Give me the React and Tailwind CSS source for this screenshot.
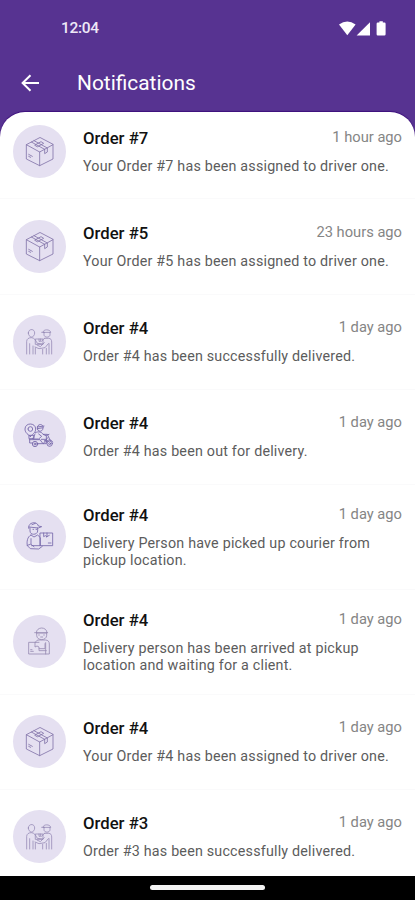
import React from 'react'

const notifications = [
    { id: 1, icon: 'box', title: 'Order #7', time: '1 hour ago', lines: ['Your Order #7 has been assigned to driver one.'] },
    { id: 2, icon: 'box', title: 'Order #5', time: '23 hours ago', lines: ['Your Order #5 has been assigned to driver one.'] },
    { id: 3, icon: 'delivered', title: 'Order #4', time: '1 day ago', lines: ['Order #4 has been successfully delivered.'] },
    { id: 4, icon: 'scooter', title: 'Order #4', time: '1 day ago', lines: ['Order #4 has been out for delivery.'] },
    { id: 5, icon: 'picked', title: 'Order #4', time: '1 day ago', lines: ['Delivery Person have picked up courier from', 'pickup location.'] },
    { id: 6, icon: 'arrived', title: 'Order #4', time: '1 day ago', lines: ['Delivery person has been arrived at pickup', 'location and waiting for a client.'] },
    { id: 7, icon: 'box', title: 'Order #4', time: '1 day ago', lines: ['Your Order #4 has been assigned to driver one.'] },
    { id: 8, icon: 'delivered', title: 'Order #3', time: '1 day ago', lines: ['Order #3 has been successfully delivered.'] },
]

export default function App() {
    return (
        <div className="w-full h-[900px] bg-[#573391] flex flex-col overflow-hidden font-['Roboto',sans-serif]">
            <StatusBar />
            <header className="h-[55px] shrink-0 flex items-center pl-[20px] pb-[4px]">
                <BackArrow />
                <h1 className="ml-[37px] pt-[2px] text-[20.9px] leading-none text-white">Notifications</h1>
            </header>

            <main className="flex-1 min-h-0 bg-white rounded-t-[25px] overflow-hidden shadow-[0_-1px_1px_#3d0f7d]">
                <div className="-mt-[8px]">
                    {notifications.map((item) => (
                        <NotificationRow key={item.id} item={item} />
                    ))}
                </div>
            </main>

            <div className="h-[24px] shrink-0 bg-black flex justify-center pt-[9px]">
                <div className="w-[115px] h-[5px] rounded-full bg-[#f4f4f4]" />
            </div>
        </div>
    )
}

function StatusBar() {
    return (
        <div className="h-[57px] shrink-0 flex items-center justify-between pl-[61px] pr-[28px]">
            <span className="text-[15.5px] font-medium leading-none text-[#eee8f7] pt-[1px] tracking-[-0.3px]">12:04</span>
            <svg width="48" height="16" viewBox="0 0 48 16" fill="white">
                <path d="M0 3.4Q8.3-2.4 16.6 3.4L8.3 14.2Z" />
                <path d="M31 1.2V14.4H17.6Z" />
                <path d="M40.4 0.2h3.4v1.3h1.6q1.2 0 1.2 1.2v10.6q0 1.2-1.2 1.2h-6.6q-1.2 0-1.2-1.2V2.7q0-1.2 1.2-1.2h1.6z" />
            </svg>
        </div>
    )
}

function BackArrow() {
    return (
        <svg width="20" height="18" viewBox="0 0 20 18" fill="none" stroke="white" strokeWidth="2">
            <path d="M19 9H3M10.5 1.2L2.6 9l7.9 7.8" />
        </svg>
    )
}

function NotificationRow({ item }) {
    const tall = item.lines.length > 1

    return (
        <div className={`${tall ? 'h-[104.8px]' : 'h-[95.25px]'} flex items-center pl-[13px] pr-[13px] border-b border-[#fafafb]`}>
            <div className="w-[53px] h-[53px] shrink-0 rounded-full bg-[#e5e0f1]">
                <StepIcon name={item.icon} />
            </div>
            <div className="ml-[17px] flex-1 min-w-0 pt-[1px]">
                <div className="flex justify-between items-start h-[29px]">
                    <h2 className="text-[16.7px] leading-[20px] font-medium text-[#111111]">{item.title}</h2>
                    <span className="text-[14.7px] leading-[17px] text-[#858585]">{item.time}</span>
                </div>
                {item.lines.map((line) => (
                    <p key={line} className="text-[14.3px] leading-[17px] text-[#5c5c5c] whitespace-nowrap tracking-[0.2px]">{line}</p>
                ))}
            </div>
        </div>
    )
}

function StepIcon({ name }) {
    return (
        <svg width="53" height="53" viewBox="0 0 159 159" fill="none" stroke="#8375aa" strokeWidth="2.5" strokeLinejoin="round" strokeLinecap="round">
            {name === 'box' && (
                <g>
                    <path d="M80 38L40 59v43l40 20 40-20V59zM40 59l40 22 40-22M80 81v41" />
                    <path d="M55 51l40 22M63 47l40 22v12l-8 5V73M66 60l18-10 8 5-18 10z" />
                    <path d="M47 88l11 6M47 94l6 3" />
                </g>
            )}
            {name === 'delivered' && (
                <g stroke="#9488b5" strokeWidth="2.3">
                    <path d="M46 54c0-14 19-14 19 0 0 6-4 12-9.5 12S46 60 46 54zM41 117V79c0-7 6-11 14-11 9 0 13 8 18 17l16 2M50 117V86M60 117v-24M67 117v-18" />
                    <path d="M90 51c0-9 22-9 23 0zM86 52h8M93 52v7c0 10 18 10 18 0v-7M94 70h13c6 0 9 4 9 11v36M108 117V86M100 117v-17M89 117v-14" />
                    <path d="M68 72h22v16H68zM78 72v7h5v-7M66 96l12 5 18-3 10-12M72 90l10 5 12-12M94 70l-8 9" />
                </g>
            )}
            {name === 'scooter' && (
                <g stroke="#7566a9" strokeWidth="2.6">
                    <path d="M52 79C40 71 36 65 36 57c0-20 32-20 32 0 0 8-5 14-16 22zM45 57a7 7 0 1 0 14 0 7 7 0 1 0-14 0" />
                    <path d="M73 56c-3-15 17-17 18-3l-18 3c1 11 17 10 17-1M73 51l20-3M67 68c9-5 20-2 23 5l9 4M66 72l-7 15h18l9-8-9-7" />
                    <path d="M49 76h14v10H49zM49 89h32l9 12h10V76l8-3M91 73h12l9 19M50 89v10h8M73 101h18l13-18" />
                    <circle cx="66" cy="102" r="8" />
                    <circle cx="66" cy="102" r="3" />
                    <circle cx="110" cy="101" r="8" />
                    <circle cx="110" cy="101" r="3" />
                    <path d="M85 88h15M94 92l11 2M99 96c4-8 17-9 20 0" />
                </g>
            )}
            {name === 'picked' && (
                <g stroke="#7566a9" strokeWidth="2.5">
                    <path d="M47 55c-3-20 26-22 29-7l10 2-10 4-28-3M51 54v9c0 13 22 13 23 0V54M57 44l10-4M60 58h2M69 58h2" />
                    <path d="M54 75c-12 5-13 22-11 32l9 9 25 1 11-8M54 75l9 6 11-6 8 8v24H56M54 86v17l9 7M43 106l9-3" />
                    <path d="M82 69h37v38H82zM92 69v11l5-3 5 3V69M106 99h8M100 81l9-5" />
                </g>
            )}
            {name === 'arrived' && (
                <g stroke="#978cb3" strokeWidth="2.5">
                    <path d="M70 53c0-19 32-19 32 0zM65 53h39M71 54v7c0 17 30 17 30 0v-7M78 59v2M93 59v2M83 66h6" />
                    <path d="M68 82c1-6 5-7 11-7h18c8 0 12 5 12 12v30H47V82h31M66 82v14l6-3 6 3v5h18V86M98 83v34M78 101v6h22" />
                    <path d="M53 109h8M53 104h4" />
                </g>
            )}
        </svg>
    )
}
